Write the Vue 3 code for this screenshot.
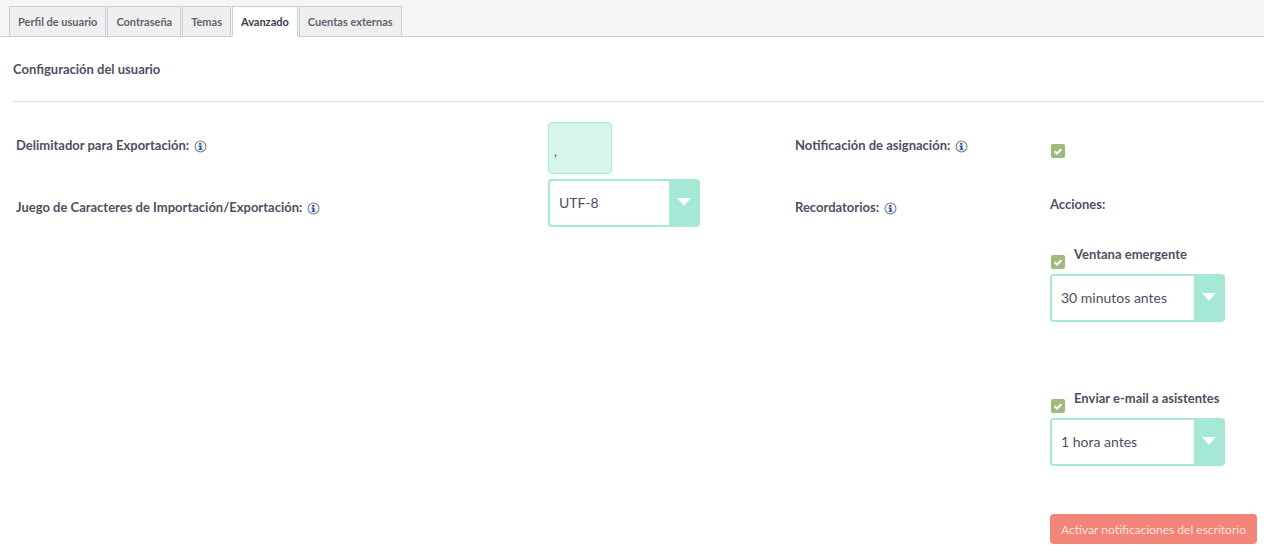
<template>
  <div class="page">
    <div class="tabs">
      <a
        v-for="tab in tabs"
        :key="tab"
        class="tab"
        :class="{ active: tab === 'Avanzado' }"
      >{{ tab }}</a>
    </div>

    <div class="panel">
      <h4 class="title">Configuración del usuario</h4>
      <hr class="rule" />

      <div class="form">
        <div class="col-label">
          <div class="row-one">
            <span class="label">Delimitador para Exportación:</span>
            <svg class="info" viewBox="0 0 14 14"><use href="#info-icon" /></svg>
          </div>
          <div class="row-two">
            <span class="label">Juego de Caracteres de Importación/Exportación:</span>
            <svg class="info" viewBox="0 0 14 14"><use href="#info-icon" /></svg>
          </div>
        </div>

        <div class="col-field">
          <div class="delimiter">,</div>
          <div class="select charset">
            <span class="select-text">UTF-8</span>
            <span class="select-btn"><i class="caret"></i></span>
          </div>
        </div>

        <div class="col-label-2">
          <div class="row-one">
            <span class="label">Notificación de asignación:</span>
            <svg class="info" viewBox="0 0 14 14"><use href="#info-icon" /></svg>
          </div>
          <div class="row-two">
            <span class="label">Recordatorios:</span>
            <svg class="info" viewBox="0 0 14 14"><use href="#info-icon" /></svg>
          </div>
        </div>

        <div class="col-actions">
          <div class="check-only">
            <svg class="check" viewBox="0 0 14 14"><use href="#check-icon" /></svg>
          </div>
          <div class="label actions-title">Acciones:</div>

          <div class="reminder">
            <div class="reminder-head">
              <svg class="check" viewBox="0 0 14 14"><use href="#check-icon" /></svg>
              <span class="label">Ventana emergente</span>
            </div>
            <div class="select small">
              <span class="select-text">30 minutos antes</span>
              <span class="select-btn"><i class="caret"></i></span>
            </div>
          </div>

          <div class="reminder">
            <div class="reminder-head">
              <svg class="check" viewBox="0 0 14 14"><use href="#check-icon" /></svg>
              <span class="label">Enviar e-mail a asistentes</span>
            </div>
            <div class="select small">
              <span class="select-text">1 hora antes</span>
              <span class="select-btn"><i class="caret"></i></span>
            </div>
          </div>

          <button class="notify">Activar notificaciones del escritorio</button>
        </div>
      </div>
    </div>

    <svg class="defs" width="0" height="0">
      <defs>
        <g id="info-icon">
          <circle cx="7" cy="7" r="5.9" fill="#f4f4f6" stroke="#77777f" stroke-width="1.1" />
          <path d="M5.4 3.3h2.6v1.7h-2.6z" fill="#1f4fb0" />
          <path d="M5 6h3.1v3.9h1v1h-4.2v-1h1v-2.9h-.9z" fill="#1f4fb0" />
        </g>
        <g id="check-icon">
          <rect width="14" height="14" rx="2" fill="#9dbb7d" />
          <path d="M3.6 7.2l2.4 2.3 4.4-4.3" fill="none" stroke="#fff" stroke-width="2" />
        </g>
      </defs>
    </svg>
  </div>
</template>

<script setup>
const tabs = ['Perfil de usuario', 'Contraseña', 'Temas', 'Avanzado', 'Cuentas externas']
</script>

<style>
html,
body {
  margin: 0;
  background: #fff;
}
</style>

<style scoped>
.page {
  height: 554px;
  overflow: hidden;
  font-family: Lato, "Liberation Sans", sans-serif;
  color: #534d64;
  background: #fff;
}

.tabs {
  display: flex;
  gap: 1px;
  height: 37px;
  box-sizing: border-box;
  padding: 6px 0 0 9px;
  background: #f5f5f5;
  border-bottom: 1px solid #c3cfd9;
}

.tab {
  height: 31px;
  box-sizing: border-box;
  padding: 0 8px;
  border: 1px solid #c3cfd9;
  background: #efefef;
  color: #67616f;
  font-size: 11px;
  font-weight: 700;
  line-height: 30px;
}

.tab.active {
  height: 31px;
  background: #fff;
  border-bottom-color: #fff;
  color: #3e3a4d;
}

.panel {
  padding: 0 0 0 13px;
}

.title {
  margin: 0;
  padding-top: 24px;
  height: 40px;
  font-size: 13px;
  font-weight: 700;
  line-height: 16px;
}

.rule {
  margin: 0;
  border: 0;
  border-top: 1px solid #dfdfdf;
  height: 0;
}

.form {
  display: flex;
  padding: 20px 0 0 3px;
}

.label {
  font-size: 13px;
  font-weight: 700;
  line-height: 16px;
  color: #534d64;
}

.info {
  width: 13px;
  height: 13px;
  margin-left: 5px;
  vertical-align: -3px;
}

.col-label {
  width: 532px;
}

.col-label-2 {
  width: 255px;
}

.col-field {
  width: 247px;
}

.row-one {
  height: 62px;
  padding-top: 12px;
  box-sizing: border-box;
}

.row-two {
  padding-top: 12px;
}

.delimiter {
  width: 64px;
  height: 52px;
  box-sizing: border-box;
  padding: 20px 5px 0;
  margin-bottom: 5px;
  background: #d8f5ec;
  border: 1px solid #a5e8d6;
  border-radius: 4px;
  font-size: 13px;
  line-height: 16px;
}

.select {
  display: flex;
  box-sizing: border-box;
  height: 48px;
  border: 2px solid #a5e8d6;
  border-radius: 4px;
  background: #fff;
}

.charset {
  width: 152px;
}

.small {
  width: 175px;
}

.select-text {
  flex: 1;
  padding-left: 9px;
  font-size: 14px;
  line-height: 44px;
  color: #534d64;
}

.select-btn {
  display: flex;
  align-items: center;
  justify-content: center;
  width: 29px;
  background: #a5e8d6;
}

.caret {
  width: 0;
  height: 0;
  margin-bottom: 3px;
  border-left: 7px solid transparent;
  border-right: 7px solid transparent;
  border-top: 8px solid #fff;
}

.col-actions {
  flex: 1;
}

.check {
  display: block;
  width: 14px;
  height: 14px;
}

.check-only {
  height: 62px;
  padding: 22px 0 0 1px;
  box-sizing: border-box;
}

.actions-title {
  padding-top: 12px;
  height: 62px;
  box-sizing: border-box;
}

.reminder {
  height: 144px;
}

.reminder-head {
  display: flex;
  height: 28px;
  padding-left: 1px;
  box-sizing: border-box;
}

.reminder-head .check {
  margin: 9px 9px 0 0;
}

.notify {
  display: block;
  width: 207px;
  height: 30px;
  padding: 0;
  border: 0;
  border-radius: 4px;
  background: #f28478;
  color: #fbe3df;
  font-family: inherit;
  font-size: 12px;
  margin-top: -20px;
}

.defs {
  position: absolute;
}
</style>
